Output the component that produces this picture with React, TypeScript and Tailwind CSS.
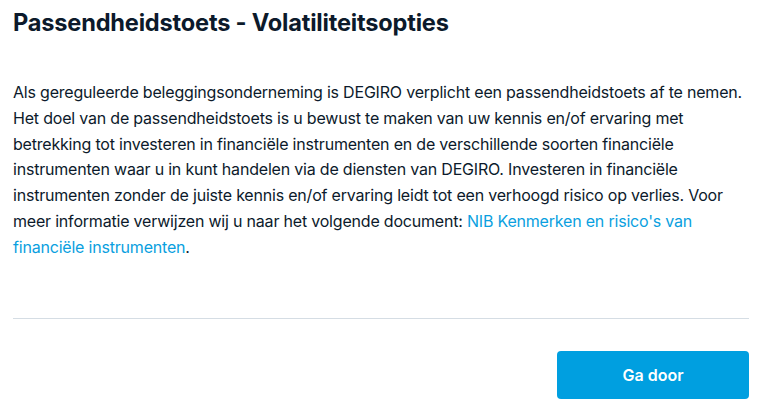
export default function App() {
  return (
    <div className="min-h-[406px] w-[762px] bg-white font-['Inter','Liberation_Sans',sans-serif] text-[#0c1a2b]">
      <div className="px-[13px] pt-[8px]">
        <h1 className="text-[23.6px] font-bold leading-[30px] tracking-[-0.2px]">
          Passendheidstoets - Volatiliteitsopties
        </h1>
        <p className="mt-[42px] text-[16px] leading-[25.8px] tracking-[-0.2px]">
          Als gereguleerde beleggingsonderneming is DEGIRO verplicht een passendheidstoets af te nemen.
          <br />
          Het doel van de passendheidstoets is u bewust te maken van uw kennis en/of ervaring met
          <br />
          betrekking tot investeren in financiële instrumenten en de verschillende soorten financiële
          <br />
          instrumenten waar u in kunt handelen via de diensten van DEGIRO. Investeren in financiële
          <br />
          instrumenten zonder de juiste kennis en/of ervaring leidt tot een verhoogd risico op verlies. Voor
          <br />
          meer informatie verwijzen wij u naar het volgende document:{" "}
          <a href="#" className="text-[#0a9fe0]">
            NIB Kenmerken en risico's van
            <br />
            financiële instrumenten
          </a>
          .
        </p>
        <div className="mt-[57px] border-t border-[#d5dde4]" />
        <div className="mt-[32px] flex justify-end">
          <button
            type="button"
            className="h-[48px] w-[192px] rounded-[4px] bg-[#009fe0] text-[16px] font-semibold text-white"
          >
            Ga door
          </button>
        </div>
      </div>
    </div>
  );
}
